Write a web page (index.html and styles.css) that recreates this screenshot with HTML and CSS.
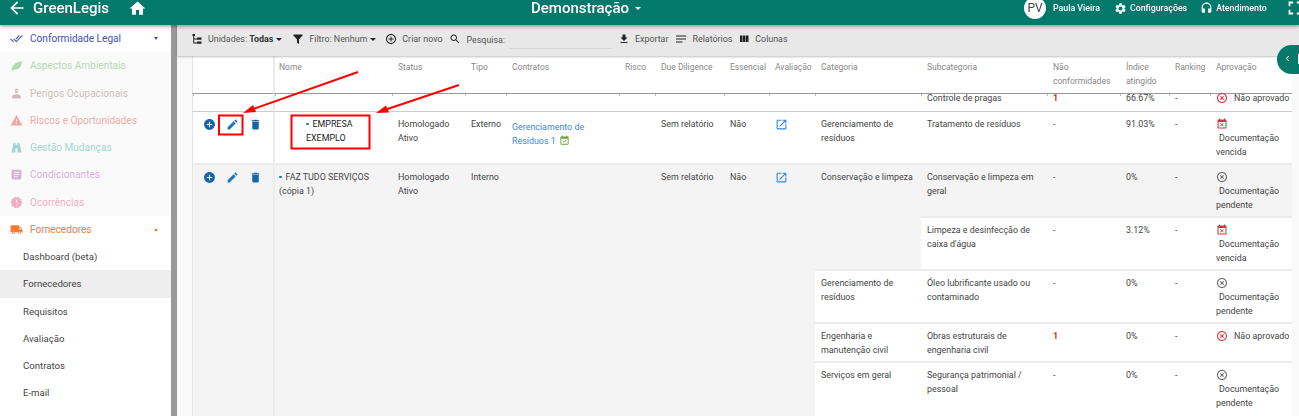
FILE: index.html
```html
<!DOCTYPE html>
<html lang="pt-BR">
<head>
<meta charset="utf-8">
<title>GreenLegis</title>
<link rel="stylesheet" href="styles.css">
</head>
<body>
<svg class="sprite" width="0" height="0" aria-hidden="true">
  <symbol id="i-back" viewBox="0 0 24 24"><path d="M20 11H7.83l5.59-5.59L12 4l-8 8 8 8 1.41-1.41L7.83 13H20v-2z"/></symbol>
  <symbol id="i-home" viewBox="0 0 24 24"><path d="M10 20v-6h4v6h5v-8h3L12 3 2 12h3v8z"/></symbol>
  <symbol id="i-gear" viewBox="0 0 24 24"><path d="M19.14 12.94c.04-.3.06-.61.06-.94 0-.32-.02-.64-.07-.94l2.03-1.58c.18-.14.23-.41.12-.61l-1.92-3.32c-.12-.22-.37-.29-.59-.22l-2.39.96c-.5-.38-1.03-.7-1.62-.94l-.36-2.54c-.04-.24-.24-.41-.48-.41h-3.84c-.24 0-.43.17-.47.41l-.36 2.54c-.59.24-1.13.57-1.62.94l-2.39-.96c-.22-.08-.47 0-.59.22L2.74 8.87c-.12.21-.08.47.12.61l2.03 1.58c-.05.3-.09.63-.09.94s.02.64.07.94l-2.03 1.58c-.18.14-.23.41-.12.61l1.92 3.32c.12.22.37.29.59.22l2.39-.96c.5.38 1.03.7 1.62.94l.36 2.54c.05.24.24.41.48.41h3.84c.24 0 .44-.17.47-.41l.36-2.54c.59-.24 1.13-.56 1.62-.94l2.39.96c.22.08.47 0 .59-.22l1.92-3.32c.12-.22.07-.47-.12-.61l-2.01-1.58zM12 15.6c-1.98 0-3.6-1.62-3.6-3.6s1.62-3.6 3.6-3.6 3.6 1.62 3.6 3.6-1.62 3.6-3.6 3.6z"/></symbol>
  <symbol id="i-headset" viewBox="0 0 24 24"><path d="M12 1c-4.97 0-9 4.03-9 9v7c0 1.66 1.34 3 3 3h3v-8H5v-2c0-3.87 3.13-7 7-7s7 3.13 7 7v2h-4v8h3c1.66 0 3-1.34 3-3v-7c0-4.97-4.03-9-9-9z"/></symbol>
  <symbol id="i-full" viewBox="0 0 24 24"><path d="M7 14H5v5h5v-2H7v-3zm-2-4h2V7h3V5H5v5zm12 7h-3v2h5v-5h-2v3zM14 5v2h3v3h2V5h-5z"/></symbol>
  <symbol id="i-pencil" viewBox="0 0 24 24"><path d="M3 17.25V21h3.75L17.81 9.94l-3.75-3.75L3 17.25zM20.71 7.04c.39-.39.39-1.02 0-1.41l-2.34-2.34c-.39-.39-1.02-.39-1.41 0l-1.83 1.83 3.75 3.75 1.83-1.83z"/></symbol>
  <symbol id="i-trash" viewBox="0 0 24 24"><path d="M6 19c0 1.1.9 2 2 2h8c1.1 0 2-.9 2-2V7H6v12zM19 4h-3.5l-1-1h-5l-1 1H5v2h14V4z"/></symbol>
  <symbol id="i-add" viewBox="0 0 24 24"><path d="M12 2C6.48 2 2 6.48 2 12s4.48 10 10 10 10-4.48 10-10S17.52 2 12 2zm5 11h-4v4h-2v-4H7v-2h4V7h2v4h4v2z"/></symbol>
  <symbol id="i-addo" viewBox="0 0 24 24"><path d="M13 7h-2v4H7v2h4v4h2v-4h4v-2h-4V7zm-1-5C6.48 2 2 6.48 2 12s4.48 10 10 10 10-4.48 10-10S17.52 2 12 2zm0 18c-4.41 0-8-3.59-8-8s3.59-8 8-8 8 3.59 8 8-3.59 8-8 8z"/></symbol>
  <symbol id="i-open" viewBox="0 0 24 24"><path d="M19 19H5V5h7V3H5c-1.11 0-2 .9-2 2v14c0 1.1.89 2 2 2h14c1.1 0 2-.9 2-2v-7h-2v7zM14 3v2h3.59l-9.83 9.83 1.41 1.41L19 6.41V10h2V3h-7z"/></symbol>
  <symbol id="i-funnel" viewBox="0 0 24 24"><path d="M3 3h18v3.5h-1.5L14 13v9l-4-2.5V13L4.500 6.500H3z"/></symbol>
  <symbol id="i-tree" viewBox="0 0 24 24"><path d="M3 2h5v4H6.500v5H12V9h9v4.500h-9V13H6.500v6H12v-2h9v4.500h-9V21H4.500V6H3z"/></symbol>
  <symbol id="i-search" viewBox="0 0 24 24"><path d="M15.5 14h-.79l-.28-.27C15.41 12.59 16 11.11 16 9.5 16 5.91 13.09 3 9.5 3S3 5.91 3 9.5 5.91 16 9.5 16c1.61 0 3.09-.59 4.23-1.57l.27.28v.79l5 4.99L20.49 19l-4.99-5zm-6 0C7.01 14 5 11.99 5 9.5S7.01 5 9.5 5 14 7.01 14 9.5 11.99 14 9.5 14z"/></symbol>
  <symbol id="i-down" viewBox="0 0 24 24"><path d="M19 9h-4V3H9v6H5l7 7 7-7zM5 18v2h14v-2H5z"/></symbol>
  <symbol id="i-lines" viewBox="0 0 24 24"><path d="M2 5h20v2H2zM2 11h20v2H2zM2 17h13v2H2z"/></symbol>
  <symbol id="i-cols" viewBox="0 0 24 24"><path d="M10 18h5V5h-5v13zm-6 0h5V5H4v13zM16 5v13h5V5h-5z"/></symbol>
  <symbol id="i-truck" viewBox="0 0 24 24"><path d="M20 8h-3V4H3c-1.100 0-2 .9-2 2v11h2c0 1.660 1.340 3 3 3s3-1.340 3-3h6c0 1.660 1.340 3 3 3s3-1.340 3-3h2v-5l-3-4zM6 18.500c-.83 0-1.500-.67-1.500-1.500s.67-1.500 1.500-1.500 1.500.67 1.500 1.500-.67 1.500-1.500 1.500zm13.500-9l1.960 2.500H17V9.500h2.500zm-1.500 9c-.83 0-1.500-.67-1.500-1.500s.67-1.500 1.500-1.500 1.500.67 1.500 1.500-.67 1.500-1.500 1.500z"/></symbol>
  <symbol id="i-warn" viewBox="0 0 24 24"><path d="M1 21h22L12 2 1 21zm12-3h-2v-2h2v2zm0-4h-2v-4h2v4z"/></symbol>
  <symbol id="i-leaf" viewBox="0 0 24 24"><path d="M3 20.500C4 12 9 6 22 4c-.5 9-5 16-14 15.500l-3 2.500z"/></symbol>
  <symbol id="i-worker" viewBox="0 0 24 24"><path d="M9.500 3h5v2h1.500v1.500H8V5h1.500zM8.500 8h7c0 2-1.500 3.500-3.500 3.500S8.500 10 8.500 8zM4 21v-3c0-3 4-4.500 8-4.500s8 1.500 8 4.500v3z"/></symbol>
  <symbol id="i-binoc" viewBox="0 0 24 24"><path d="M7 3h3v4h4V3h3l1 4 3 12v2h-7v-7h-4v7H3v-2L6 7z"/></symbol>
  <symbol id="i-doc" viewBox="0 0 24 24"><path d="M19 3H5c-1.100 0-2 .9-2 2v14c0 1.100.9 2 2 2h14c1.100 0 2-.9 2-2V5c0-1.100-.9-2-2-2zm-5 14H7v-2h7v2zm3-4H7v-2h10v2zm0-4H7V7h10v2z"/></symbol>
  <symbol id="i-burst" viewBox="0 0 24 24"><path d="M23 12l-2.440-2.780.34-3.680-3.610-.82-1.890-3.180L12 3 8.600 1.540 6.710 4.720l-3.610.81.34 3.680L1 12l2.440 2.780-.34 3.690 3.610.82 1.890 3.180L12 21l3.400 1.460 1.890-3.180 3.610-.82-.34-3.680L23 12zm-10 5h-2v-2h2v2zm0-4h-2V7h2v6z"/></symbol>
  <symbol id="i-checks" viewBox="0 0 24 24"><path d="M18 7l-1.410-1.410-6.340 6.340 1.410 1.410L18 7zm4.240-1.410L11.660 16.170 7.480 12l-1.410 1.410L11.660 19l12-12-1.420-1.410zM.41 13.410L6 19l1.410-1.410L1.830 12 .41 13.410z"/></symbol>
  <symbol id="i-off" viewBox="0 0 24 24"><path d="M14.590 8L12 10.590 9.410 8 8 9.410 10.590 12 8 14.590 9.410 16 12 13.410 14.590 16 16 14.590 13.410 12 16 9.410 14.590 8zM12 2C6.470 2 2 6.470 2 12s4.470 10 10 10 10-4.470 10-10S17.530 2 12 2zm0 18c-4.410 0-8-3.590-8-8s3.590-8 8-8 8 3.590 8 8-3.590 8-8 8z"/></symbol>
  <symbol id="i-busy" viewBox="0 0 24 24"><path d="M9.310 17l2.440-2.440L14.190 17l1.060-1.060-2.440-2.440 2.440-2.440L14.190 10l-2.440 2.440L9.310 10l-1.060 1.060 2.440 2.440-2.440 2.440L9.310 17zM19 3h-1V1h-2v2H8V1H6v2H5c-1.110 0-1.990.9-1.990 2L3 19c0 1.100.89 2 2 2h14c1.100 0 2-.9 2-2V5c0-1.100-.9-2-2-2zm0 16H5V8h14v11z"/></symbol>
  <symbol id="i-avail" viewBox="0 0 24 24"><path d="M16.530 11.060L15.470 10l-4.880 4.880-2.120-2.120-1.060 1.060L10.590 17l5.940-5.940zM19 3h-1V1h-2v2H8V1H6v2H5c-1.110 0-1.990.9-1.990 2L3 19c0 1.100.89 2 2 2h14c1.100 0 2-.9 2-2V5c0-1.100-.9-2-2-2zm0 16H5V8h14v11z"/></symbol>
</svg>

<header class="topbar">
  <div class="brand">
    <svg class="ic ic-back"><use href="#i-back"/></svg>
    <span class="brand-name">GreenLegis</span>
    <svg class="ic ic-home"><use href="#i-home"/></svg>
  </div>
  <div class="tenant">Demonstração <span class="caret caret-white"></span></div>
  <div class="userbar">
    <span class="avatar">PV</span>
    <span class="user-name">Paula Vieira</span>
    <svg class="ic ic-top ic-gear"><use href="#i-gear"/></svg>
    <span class="user-link">Configurações</span>
    <svg class="ic ic-top ic-head"><use href="#i-headset"/></svg>
    <span class="user-link">Atendimento</span>
    <svg class="ic ic-full"><use href="#i-full"/></svg>
  </div>
</header>

<div class="shell">
  <nav class="sidebar">
    <a class="nav-item c-legal"><svg class="ic nav-ic"><use href="#i-checks"/></svg><span>Conformidade Legal</span><span class="caret caret-nav"></span></a>
    <div class="faded">
      <a class="nav-item c-amb"><svg class="ic nav-ic"><use href="#i-leaf"/></svg><span>Aspectos Ambientais</span></a>
      <a class="nav-item c-per"><svg class="ic nav-ic"><use href="#i-worker"/></svg><span>Perigos Ocupacionais</span></a>
      <a class="nav-item c-ris"><svg class="ic nav-ic"><use href="#i-warn"/></svg><span>Riscos e Oportunidades</span></a>
      <a class="nav-item c-ges"><svg class="ic nav-ic"><use href="#i-binoc"/></svg><span>Gestão Mudanças</span></a>
      <a class="nav-item c-con"><svg class="ic nav-ic"><use href="#i-doc"/></svg><span>Condicionantes</span></a>
      <a class="nav-item c-oco"><svg class="ic nav-ic"><use href="#i-burst"/></svg><span>Ocorrências</span></a>
    </div>
    <a class="nav-item c-for"><svg class="ic nav-ic"><use href="#i-truck"/></svg><span>Fornecedores</span><span class="caret caret-nav caret-up"></span></a>
    <a class="nav-sub">Dashboard (beta)</a>
    <a class="nav-sub is-active">Fornecedores</a>
    <a class="nav-sub">Requisitos</a>
    <a class="nav-sub">Avaliação</a>
    <a class="nav-sub">Contratos</a>
    <a class="nav-sub">E-mail</a>
  </nav>

  <main class="content">
    <div class="toolbar">
      <svg class="ic tb-ic"><use href="#i-tree"/></svg>
      <span class="tb-label">Unidades: <b>Todas</b></span><span class="caret caret-tb"></span>
      <svg class="ic tb-ic tb-funnel"><use href="#i-funnel"/></svg>
      <span class="tb-label">Filtro: Nenhum</span><span class="caret caret-tb"></span>
      <svg class="ic tb-ic tb-addo"><use href="#i-addo"/></svg>
      <span class="tb-label">Criar novo</span>
      <svg class="ic tb-ic tb-search"><use href="#i-search"/></svg>
      <span class="tb-label tb-pesq">Pesquisa:</span>
      <span class="tb-input"></span>
      <svg class="ic tb-ic tb-down"><use href="#i-down"/></svg>
      <span class="tb-label">Exportar</span>
      <svg class="ic tb-ic tb-lines"><use href="#i-lines"/></svg>
      <span class="tb-label">Relatórios</span>
      <svg class="ic tb-ic tb-cols"><use href="#i-cols"/></svg>
      <span class="tb-label">Colunas</span>
    </div>

    <div class="table-wrap">
      <table class="grid">
        <colgroup>
          <col class="w81"><col class="w119"><col class="w73"><col class="w41"><col class="w113"><col class="w36"><col class="w69"><col class="w45"><col class="w46"><col class="w106"><col class="w126"><col class="w73"><col class="w49"><col class="w41"><col class="w82">
        </colgroup>
        <thead>
          <tr>
            <th class="first"></th><th class="sep">Nome</th><th>Status</th><th>Tipo</th><th>Contratos</th><th>Risco</th><th>Due Diligence</th><th>Essencial</th><th>Avaliação</th><th>Categoria</th><th>Subcategoria</th><th>Não conformidades</th><th>Índice atingido</th><th>Ranking</th><th>Aprovação</th>
          </tr>
        </thead>
        <tbody>
          <tr class="partial">
            <td class="first"></td><td class="sep"></td><td></td><td></td><td></td><td></td><td></td><td></td><td></td><td></td>
            <td>Controle de pragas</td><td class="nc">1</td><td>66.67%</td><td>-</td>
            <td class="nowrap"><svg class="ic st st-red"><use href="#i-off"/></svg><span class="st-text">Não aprovado</span></td>
          </tr>
          <tr class="r53">
            <td class="first actions"><svg class="ic act act-add"><use href="#i-add"/></svg><svg class="ic act act-edit"><use href="#i-pencil"/></svg><svg class="ic act act-del"><use href="#i-trash"/></svg></td>
            <td class="sep nome-boxed"><span class="dot"></span>EMPRESA EXEMPLO</td>
            <td>Homologado Ativo</td><td>Externo</td>
            <td class="contract">Gerenciamento de Resíduos 1 <svg class="ic cal-ok"><use href="#i-avail"/></svg></td>
            <td></td><td>Sem relatório</td><td>Não</td>
            <td><svg class="ic open"><use href="#i-open"/></svg></td>
            <td>Gerenciamento de resíduos</td><td>Tratamento de resíduos</td><td>-</td><td>91.03%</td><td>-</td>
            <td><svg class="ic st st-red st-block"><use href="#i-busy"/></svg><span class="ind">Documentação</span> vencida</td>
          </tr>
          <tr class="r53 hover">
            <td class="first actions" rowspan="5"><svg class="ic act act-add"><use href="#i-add"/></svg><svg class="ic act act-edit"><use href="#i-pencil"/></svg><svg class="ic act act-del"><use href="#i-trash"/></svg></td>
            <td class="sep" rowspan="5"><span class="dot"></span>FAZ TUDO SERVIÇOS (cópia 1)</td>
            <td rowspan="5">Homologado Ativo</td><td rowspan="5">Interno</td><td rowspan="5"></td><td rowspan="5"></td>
            <td rowspan="5">Sem relatório</td><td rowspan="5">Não</td>
            <td rowspan="5"><svg class="ic open"><use href="#i-open"/></svg></td>
            <td rowspan="2">Conservação e limpeza</td>
            <td>Conservação e limpeza em geral</td><td>-</td><td>0%</td><td>-</td>
            <td><svg class="ic st st-grey st-block"><use href="#i-off"/></svg><span class="ind">Documentação</span> pendente</td>
          </tr>
          <tr class="r53 plain">
            <td>Limpeza e desinfecção de caixa d'água</td><td>-</td><td>3.12%</td><td>-</td>
            <td><svg class="ic st st-red st-block"><use href="#i-busy"/></svg><span class="ind">Documentação</span> vencida</td>
          </tr>
          <tr class="r53 plain">
            <td>Gerenciamento de resíduos</td><td>Óleo lubrificante usado ou contaminado</td><td>-</td><td>0%</td><td>-</td>
            <td><svg class="ic st st-grey st-block"><use href="#i-off"/></svg><span class="ind">Documentação</span> pendente</td>
          </tr>
          <tr class="r39 plain">
            <td>Engenharia e manutenção civil</td><td>Obras estruturais de engenharia civil</td><td class="nc">1</td><td>0%</td><td>-</td>
            <td class="nowrap"><svg class="ic st st-red"><use href="#i-off"/></svg><span class="st-text">Não aprovado</span></td>
          </tr>
          <tr class="r53 plain last">
            <td>Serviços em geral</td><td>Segurança patrimonial / pessoal</td><td>-</td><td>0%</td><td>-</td>
            <td><svg class="ic st st-grey st-block"><use href="#i-off"/></svg><span class="ind">Documentação</span> pendente</td>
          </tr>
        </tbody>
      </table>
    </div>
  </main>
</div>

<div class="side-tab"><svg class="tab-chev" viewBox="0 0 24 24"><path d="M15.410 7.410L14 6l-6 6 6 6 1.410-1.410L10.830 12z"/></svg><span class="tab-edge"></span></div>

<svg class="annot" width="1299" height="416" viewBox="0 0 1299 416" aria-hidden="true">
  <rect x="219" y="115.500" width="23.500" height="19" class="annot-box"/>
  <rect x="291.500" y="115.500" width="78" height="33" class="annot-box"/>
  <line x1="358" y1="72" x2="252" y2="109.500" class="annot-line"/>
  <polygon points="243,113 253,105 256,112" class="annot-head"/>
  <line x1="459" y1="85" x2="386" y2="109.500" class="annot-line"/>
  <polygon points="376,113 386,105.500 389,112.500" class="annot-head"/>
</svg>
</body>
</html>
```

FILE: styles.css
```css
* { box-sizing: border-box; }
html, body { margin: 0; height: 416px; overflow: hidden; }
body { font-family: Roboto, "Liberation Sans", sans-serif; font-size: 8.900px; color: #444; background: #fff; position: relative; filter: blur(.35px); }
.sprite { position: absolute; }
.ic { display: inline-block; fill: currentColor; flex: none; }

.caret { display: inline-block; width: 0; height: 0; border-left: 3px solid transparent; border-right: 3px solid transparent; border-top: 3px solid currentColor; }

/* top bar */
.topbar { height: 25px; background: #02796b; color: #fff; display: flex; align-items: center; box-shadow: 0 1px 4px rgba(0,0,0,.45); position: relative; z-index: 3; padding-bottom: 9px; overflow: visible; }
.brand { width: 531px; display: flex; align-items: center; flex: none; padding-left: 7px; }
.ic-back { width: 20px; height: 20px; }
.brand-name { font-size: 15px; font-weight: 500; margin-left: 6px; }
.ic-home { width: 19px; height: 19px; margin-left: 19px; }
.tenant { font-size: 15px; font-weight: 500; width: 491px; flex: none; white-space: nowrap; }
.caret-white { border-left-width: 3.500px; border-right-width: 3.500px; border-top-width: 3.500px; vertical-align: 3px; margin-left: 2px; }
.userbar { display: flex; align-items: center; flex: 1; font-weight: 500; font-size: 8.800px; padding-left: 2px; white-space: nowrap; }
.avatar { width: 22px; height: 22px; border-radius: 50%; background: #fff; color: #444; font-size: 12px; font-weight: 400; display: flex; align-items: center; justify-content: center; flex: none; }
.user-name { margin-left: 7px; }
.ic-top { width: 13px; height: 13px; }
.ic-gear { margin-left: 14px; }
.ic-head { margin-left: 13px; }
.user-link { margin-left: 3px; }
.ic-full { width: 22px; height: 22px; margin-left: 17px; }

/* sidebar */
.shell { display: flex; height: 391px; }
.sidebar { width: 177px; flex: none; background: #fff; border-right: 6px solid #999; font-size: 10.100px; }
.nav-item { height: 27.250px; display: flex; align-items: center; padding-left: 10px; }
.nav-ic { width: 13px; height: 13px; margin-right: 7px; }
.faded { background: #fafafa; }
.faded .nav-item { opacity: .42; }
.c-legal { color: #3f51b5; }
.c-amb { color: #4caf50; }
.c-per { color: #8d6e63; }
.c-ris { color: #e53935; }
.c-ges { color: #26a69a; }
.c-con { color: #ab47bc; }
.c-oco { color: #ec407a; }
.c-for { color: #ff7a30; }
.caret-nav { margin-left: auto; margin-right: 13px; border-left-width: 2.500px; border-right-width: 2.500px; }
.caret-up { border-top: 0; border-bottom: 3px solid currentColor; }
.nav-sub { height: 27.250px; display: flex; align-items: center; padding-left: 23px; color: #444; font-size: 9.600px; }
.is-active { background: #eee; }

/* main */
.content { flex: 1; min-width: 0; background: #f9f9f9; display: flex; flex-direction: column; }
.toolbar { height: 31px; background: #e8e8e8; flex: none; display: flex; align-items: center; padding: 0 0 3px 14px; font-size: 8.900px; color: #555; box-shadow: 0 1px 2px rgba(0,0,0,.25); position: relative; z-index: 2; }
.tb-ic { width: 12px; height: 12px; color: #222; }
.tb-label { margin-left: 5px; white-space: nowrap; }
.tb-label b { color: #333; }
.caret-tb { margin-left: 3px; color: #222; }
.tb-funnel { margin-left: 10px; }
.tb-addo { margin-left: 9px; }
.tb-search { margin-left: 6px; }
.tb-pesq { margin: 2px 0 0 6px; }
.tb-input { width: 102px; height: 15px; margin: 5px 0 0 5px; border-bottom: 1px solid #d8d8d8; }
.tb-down { margin-left: 6px; }
.tb-lines { margin-left: 7px; }
.tb-cols { margin-left: 6px; }

.table-wrap { flex: 1; overflow: hidden; padding: 0 7px 0 15px; }
.grid { border-collapse: separate; border-spacing: 0; table-layout: fixed; width: 1100px; background: #fff; }
.w81 { width: 81px; } .w119 { width: 119px; } .w73 { width: 73px; } .w41 { width: 41px; } .w113 { width: 113px; } .w36 { width: 36px; } .w69 { width: 69px; } .w45 { width: 45px; } .w46 { width: 46px; } .w106 { width: 106px; } .w126 { width: 126px; } .w49 { width: 49px; } .w82 { width: 82px; }

th { height: 38px; vertical-align: top; text-align: left; font-weight: 400; font-size: 8.500px; color: #888; padding: 5px 6px 0; line-height: 13.750px; border-bottom: 1px solid #999; background: #fff; }
td { vertical-align: top; padding: 6px 6px 0; line-height: 13.750px; }
.first { border-left: 1px solid #e4e4e4; }
.sep { border-left: 2px solid #ececec; padding-left: 4px; }
.nowrap { white-space: nowrap; }

.partial td { height: 18px; padding-top: 0; line-height: 9px; border-bottom: 1px solid #ccc; background: linear-gradient(#bbb, #bbb) left top / 1px 2px no-repeat #fff; }
.partial .st { margin-top: -2px; }
.r53 td { height: 53px; border-bottom: 2px solid #ececec; }
.r39 td { height: 39px; border-bottom: 2px solid #ececec; }
.hover td { background: #f4f4f4; }
.plain td { background: #fff; }
td[rowspan] { background: #f4f4f4; }
.r53 td[rowspan="5"], .last td { border-bottom: 0; }

.nc { color: #d32f2f; font-weight: 700; }
.dot { display: inline-block; width: 2.500px; height: 2.500px; border-radius: 50%; background: #1976c5; vertical-align: 2px; margin-right: 4px; }
.nome-boxed { padding-left: 31px; padding-right: 20px; color: #222; }
.contract { color: #3f87d0; padding-top: 9px; }
.cal-ok { width: 11px; height: 11px; color: #6d9f3a; vertical-align: -2px; margin-left: 1px; }
.open { width: 13px; height: 13px; color: #2f86d8; display: block; }
.st { width: 12px; height: 12px; vertical-align: -3px; }
.st-text { margin-left: 6px; }
.st-red { color: #d9323a; }
.st-grey { color: #666; }
.st-block { display: block; margin: 0 0 2px; }
.ind { padding-left: 3px; display: block; }

.actions { padding: 6px 0 0 10px; white-space: nowrap; }
.act { width: 13px; height: 13px; color: #1565a8; }
.act-edit { margin-left: 10px; color: #1976c5; }
.act-del { margin-left: 10px; }

/* panel tab and annotations */
.side-tab { position: absolute; left: 1277px; top: 45px; width: 22px; height: 29px; background: #02796b; border-radius: 15px 0 0 15px; z-index: 4; color: #fff; }
.tab-chev { position: absolute; left: 5px; top: 8px; width: 11px; height: 11px; fill: #fff; }
.tab-edge { position: absolute; right: 0; top: 9px; width: 1px; height: 10px; background: #fff; }
.annot { position: absolute; left: 0; top: 0; z-index: 5; pointer-events: none; }
.annot-box { fill: none; stroke: #f00; stroke-width: 2; }
.annot-line { stroke: #f00; stroke-width: 2; }
.annot-head { fill: #f00; }
```
